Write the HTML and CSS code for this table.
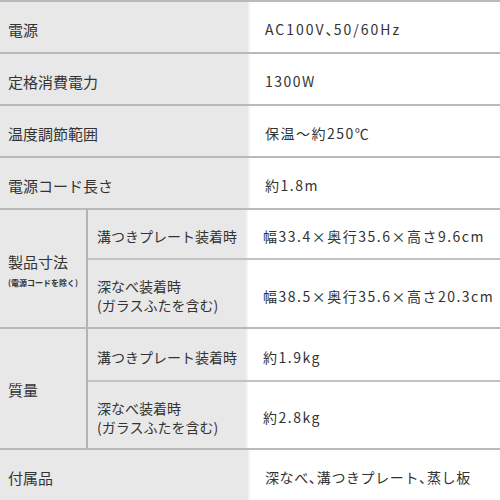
FILE: index.html
```html
<!DOCTYPE html>
<html lang="ja">
<head>
<meta charset="utf-8">
<link rel="stylesheet" href="styles.css">
</head>
<body>
<div class="spec">
  <div class="row"><div class="label">電源</div><div class="value wide">AC100V<span class="p">、</span>50/60Hz</div></div>
  <div class="row"><div class="label">定格消費電力</div><div class="value">1300W</div></div>
  <div class="row"><div class="label">温度調節範囲</div><div class="value">保温～約250℃</div></div>
  <div class="row"><div class="label">電源コード長さ</div><div class="value">約1.8m</div></div>
  <div class="row group">
    <div class="label main"><span>製品寸法</span><span class="note">(電源コードを除く)</span></div>
    <div class="subs">
      <div class="sub s1"><div class="sublabel">溝つきプレート装着時</div><div class="value">幅33.4×奥行35.6×高さ9.6cm</div></div>
      <div class="sub s2"><div class="sublabel"><span>深なべ装着時</span><span>(ガラスふたを含む)</span></div><div class="value">幅38.5×奥行35.6×高さ20.3cm</div></div>
    </div>
  </div>
  <div class="row group">
    <div class="label main"><span>質量</span></div>
    <div class="subs">
      <div class="sub s3"><div class="sublabel">溝つきプレート装着時</div><div class="value">約1.9kg</div></div>
      <div class="sub s4"><div class="sublabel"><span>深なべ装着時</span><span>(ガラスふたを含む)</span></div><div class="value">約2.8kg</div></div>
    </div>
  </div>
  <div class="row last"><div class="label">付属品</div><div class="value tight">深なべ<span class="p">、</span>溝つきプレート<span class="p">、</span>蒸し板</div></div>
</div>
</body>
</html>
```

FILE: styles.css
```css
html, body {
  margin: 0;
  padding: 0;
  background: #ffffff;
}
body {
  font-family: "Noto Sans CJK JP", "Noto Sans", sans-serif;
  color: #333333;
}
.spec {
  width: 500px;
  border-top: 2px solid #b9b9b9;
}
.row {
  display: grid;
  grid-template-columns: 250px 1fr;
  height: 50px;
  border-bottom: 2px solid #b9b9b9;
}
.row.last {
  border-bottom: none;
}
.label {
  background: #e8e8e8;
  border-right: 2px solid #f3f3f3;
  display: flex;
  align-items: center;
  padding: 4px 0 0 8px;
  font-size: 15px;
  box-sizing: border-box;
}
.value {
  display: flex;
  align-items: center;
  padding: 4px 0 0 15px;
  font-size: 14px;
  letter-spacing: 1.5px;
  box-sizing: border-box;
  white-space: nowrap;
}
.value.wide {
  letter-spacing: 2px;
}
.value.tight {
  letter-spacing: 0.6px;
}
.p {
  font-feature-settings: "palt";
  letter-spacing: 1px;
}
.row.group {
  grid-template-columns: 88px 1fr;
  height: auto;
}
.label.main {
  flex-direction: column;
  align-items: flex-start;
  justify-content: center;
  border-right: 2px solid #b3b3b3;
  padding-top: 2px;
}
.note {
  font-size: 8px;
  font-weight: bold;
  margin-top: 5px;
}
.subs {
  display: flex;
  flex-direction: column;
}
.sub {
  display: grid;
  grid-template-columns: 160px 1fr;
}
.sub + .sub {
  border-top: 2px solid #c2c2c2;
}
.s1 { height: 48px; }
.s2 { height: 67px; }
.s3 { height: 51px; }
.s4 { height: 66px; }
.sublabel {
  background: #e8e8e8;
  border-right: 2px solid #f3f3f3;
  display: flex;
  flex-direction: column;
  justify-content: center;
  gap: 1px;
  padding: 4px 0 0 9px;
  font-size: 14px;
  line-height: 18px;
  box-sizing: border-box;
}
```
